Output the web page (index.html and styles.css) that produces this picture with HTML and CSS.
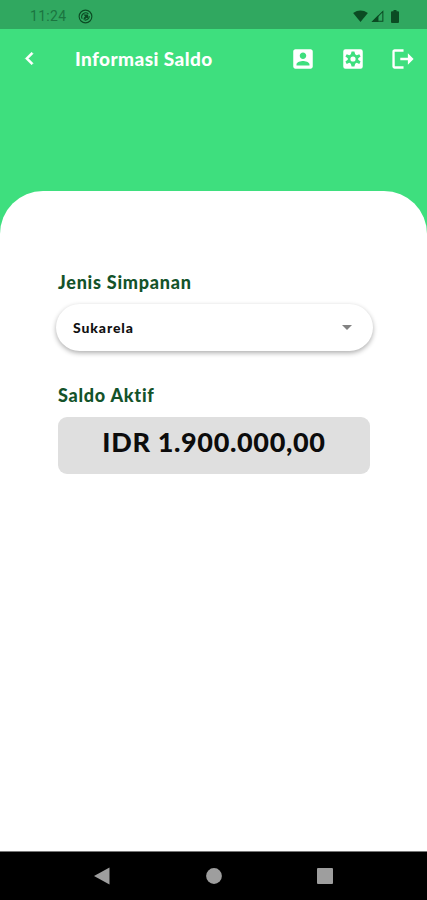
FILE: index.html
```html
<!DOCTYPE html>
<html lang="id">
<head>
    <meta charset="UTF-8">
    <meta name="viewport" content="width=device-width, initial-scale=1.0">
    <title>Informasi Saldo</title>
    <link rel="stylesheet" href="styles.css">
</head>
<body>
<!-- status bar -->
<div class="status-bar">
    <span class="time">11:24</span>
    <svg class="app-icon" viewBox="0 0 16 16">
        <circle cx="8" cy="8" r="6.800" fill="none" stroke="currentColor" stroke-width="1.200"/>
        <path d="M4.500 10.500a4.300 4.300 0 0 1 6.600-5.300M12 7.500a4.200 4.200 0 0 1-5 4.300" fill="none" stroke="currentColor" stroke-width="1.200"/>
        <path d="M5.800 5.800h5v4.700L9.300 9.200 6 12V9.500L7.500 7.700z" fill="currentColor"/>
    </svg>
    <div class="status-icons">
        <svg class="wifi" viewBox="0 0 16 13"><path d="M0 3.200Q8-2.200 16 3.200L8 13z" fill="currentColor"/></svg>
        <svg class="signal" viewBox="0 0 13 13">
            <path d="M1.500 12.300L12.300 1.500v10.800z" fill="none" stroke="currentColor" stroke-width="1.100"/>
            <path d="M0 13L7.500 5.500V13z" fill="currentColor"/>
        </svg>
        <svg class="battery" viewBox="0 0 8 13"><path d="M2.500 0h3v1.300H7q1 0 1 1V12q0 1-1 1H1q-1 0-1-1V2.300q0-1 1-1h1.500z" fill="currentColor"/></svg>
    </div>
</div>

<!-- header -->
<header class="header">
    <svg class="back" viewBox="0 0 24 24"><path d="M15.410 7.410L14 6l-6 6 6 6 1.410-1.410L10.830 12z"/></svg>
    <h1>Informasi Saldo</h1>
    <nav class="actions">
        <svg viewBox="0 0 24 24"><path d="M3 5v14c0 1.100.89 2 2 2h14c1.100 0 2-.9 2-2V5c0-1.100-.9-2-2-2H5c-1.110 0-2 .9-2 2zm12 4c0 1.660-1.340 3-3 3s-3-1.340-3-3 1.340-3 3-3 3 1.340 3 3zm-9 8c0-2 4-3.100 6-3.100s6 1.100 6 3.100v1H6v-1z"/></svg>
        <svg viewBox="0 0 24 24"><path fill-rule="evenodd" d="M5 3h14a2 2 0 0 1 2 2v14a2 2 0 0 1-2 2H5a2 2 0 0 1-2-2V5a2 2 0 0 1 2-2zM10.700 5L10 7.700L8.600 8.500L6.200 7.500L5 9.700L7.200 11.300V12.700L5 14.300L6.200 16.500L8.600 15.500L10 16.300L10.700 19H13.300L14 16.300L15.400 15.500L17.800 16.500L19 14.300L16.800 12.700V11.300L19 9.700L17.800 7.500L15.400 8.500L14 7.700L13.300 5zM12 9.600a2.400 2.400 0 1 0 0 4.800a2.400 2.400 0 1 0 0-4.800z"/></svg>
        <svg viewBox="0 0 24 24"><path d="M16.500 6.800V10.900H9.500v2.300h7v4L21.800 12zM4.300 5.200H12.500V3H4.300C3.100 3 2.200 3.900 2.200 5v14c0 1.100.9 2 2.100 2h8.200v-2.200H4.400z"/></svg>
    </nav>
</header>

<!-- isi halaman -->
<main class="content">
    <h2 class="label-jenis">Jenis Simpanan</h2>
    <div class="select">
        <span>Sukarela</span>
        <svg viewBox="0 0 10 5"><path d="M0 0h10L5 5z"/></svg>
    </div>
    <h2 class="label-saldo">Saldo Aktif</h2>
    <div class="saldo">IDR 1.900.000,00</div>
</main>

<!-- navigasi android -->
<footer class="nav-bar">
    <svg viewBox="0 0 18 18"><path d="M16.500 0.500v17L1 9z"/></svg>
    <svg viewBox="0 0 18 18"><circle cx="9" cy="9" r="7.900"/></svg>
    <svg viewBox="0 0 18 18"><rect x="1" y="1" width="16" height="16" rx="1"/></svg>
</footer>
</body>
</html>
```
FILE: styles.css
```css
* {
    box-sizing: border-box;
}

body {
    margin: 0;
    height: 900px;
    display: flex;
    flex-direction: column;
    background: #3edf7e;
    font-family: Lato, sans-serif;
    overflow: hidden;
}

svg {
    display: block;
    flex: none;
}

.status-bar {
    height: 29px;
    padding: 3px 28px 0 30px;
    display: flex;
    align-items: center;
    background: #30a860;
    color: #0b4b23;
}

.time {
    width: 48px;
    font-family: Roboto, sans-serif;
    font-size: 14px;
    letter-spacing: 0.3px;
    color: #1b7540;
}

.app-icon {
    width: 15px;
    height: 15px;
}

.status-icons {
    margin-left: auto;
    display: flex;
    align-items: center;
}

.wifi {
    width: 15px;
    height: 12px;
    margin-right: 3px;
}

.signal {
    width: 13px;
    height: 12px;
    margin-right: 7px;
}

.battery {
    width: 8px;
    height: 13px;
}

.header {
    height: 162px;
    padding: 17px 11px 0 17px;
    display: flex;
    align-items: flex-start;
    color: #fff;
    fill: #fff;
}

.back {
    width: 25px;
    height: 25px;
    stroke: #fff;
    stroke-width: 0.6;
}

h1 {
    margin: 1px 0 0 33px;
    font-size: 19px;
    line-height: 24px;
    font-weight: 900;
    letter-spacing: 0.42px;
    white-space: nowrap;
}

.actions {
    margin-left: auto;
    display: flex;
    gap: 24px;
}

.actions svg {
    width: 26px;
    height: 26px;
}

.content {
    flex: 1;
    padding: 79px 54px 0 56px;
    background: #fff;
    border-radius: 43px 43px 0 0;
}

h2 {
    margin: 0 0 0 2px;
    font-size: 18px;
    line-height: 24px;
    font-weight: 900;
    letter-spacing: 0.75px;
    color: #14532a;
}

.select {
    height: 47px;
    margin: 10px 0 32px;
    padding: 0 21px 0 17px;
    display: flex;
    align-items: center;
    justify-content: space-between;
    border-radius: 24px;
    background: #fff;
    box-shadow: 0 2px 5px rgba(0, 0, 0, 0.32);
    font-size: 14px;
    font-weight: 900;
    letter-spacing: 0.9px;
    color: #111;
}

.select svg {
    width: 10px;
    height: 5px;
    fill: #828282;
}

.saldo {
    height: 57px;
    margin: 10px 3px 0 2px;
    border-radius: 9px;
    background: #dfdfdf;
    font-size: 27px;
    line-height: 50px;
    font-weight: 900;
    letter-spacing: 0.65px;
    text-align: center;
    color: #0c0c0c;
}

.nav-bar {
    height: 49px;
    padding: 0 93px;
    display: flex;
    align-items: center;
    justify-content: space-between;
    border-top: 1px solid #777;
    background: #000;
    fill: #9e9e9e;
}

.nav-bar svg {
    width: 18px;
    height: 18px;
}
```
